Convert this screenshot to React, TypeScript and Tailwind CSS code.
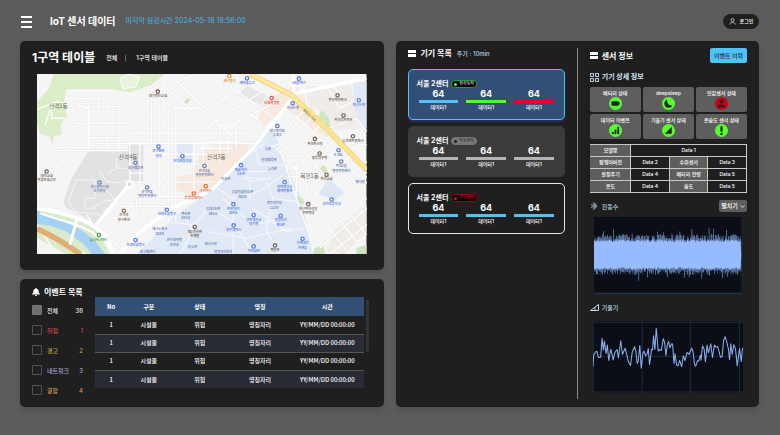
import React from "react";

const ROADS_MINOR = [
  "M140 76H270L330 90L395 72L470 52L520 30",
  "M140 76V118L160 130V175L200 180",
  "M176 80V120L205 130V258",
  "M208 76V258M235 76V150M262 84V260M300 92V262M330 92V350",
  "M160 100H262M176 125H300M205 150H540M208 175H330M215 198H310M205 218H300M225 236H560",
  "M105 257H320M140 130L190 150L120 300L51 350",
  "M51 232L75 245L90 285L150 330L100 420",
  "M51 300H85L110 350L95 400",
  "M360 150V420M395 95V240M420 95V420M445 110V480M468 150V470M522 150V380M550 150V300",
  "M330 205H580M330 235H700M380 268H560M380 297H570M330 325H560M330 352H580M340 395H540M300 425H480M270 455L330 480",
  "M395 72L420 95L460 130H540L640 215M420 50L520 140M450 30L620 190M480 27L700 200M520 27L730 175M580 27L770 165",
  "M430 110L520 30M460 135L580 30M490 150L640 40M540 150L700 50M570 180L735 75M610 195L770 110",
  "M580 205H690M560 180H650M560 230H650M600 180V290M625 170V265M650 170V250M540 250H640",
  "M780 185L960 380M800 165L1000 360M825 150L1041 355M765 205L900 430M760 240L840 330M850 130L1041 325",
  "M760 185L800 150M780 215L850 140M775 250L880 155M800 280L915 170M825 310L945 200M845 345L975 230M870 385L1000 265M890 425L1041 290M900 460L1041 335",
  "M780 250L830 400L880 540M830 300V400M860 330V430M800 285H850M800 310H850M805 335H880",
  "M890 530L1041 400M900 550L1041 430M930 569L1041 480M930 490L990 569M960 465L1020 540M985 440L1041 510",
  "M850 70L870 140L900 150M870 60H920L960 130L1000 110M920 27L960 90M930 190L1010 160L1041 200M940 230L1041 240",
  "M310 385L270 440L310 480M350 395V440L310 500M330 425L400 470",
  "M200 450L280 569M255 500L320 569M51 500L130 540L200 569M51 480L110 569",
];
const CAMPUS_ROADS = [
  "M170 345H225V400H195V430H225M170 345L145 410L165 440L240 450",
  "M240 320L260 350L300 355L320 345M225 375L265 380L290 410L250 440M290 280V310H320M260 330L300 300",
  "M215 430L250 410L310 400",
];
const BLUE_ROADS = [
  "M590 370L640 400L720 380L790 330M610 400L700 480L800 460M570 430L640 470L700 569",
  "M650 300L690 350L760 340M700 230L720 300L800 300M690 350V400M640 400V569M740 350L760 400L830 410",
  "M560 500L680 520L820 490M700 430L800 500L850 490M760 400L740 500L780 569M480 430L520 500L480 569M430 470L520 480L560 440",
  "M660 320H740M670 340H740M740 250L800 230M710 210L735 235L700 260",
];

const PLACES: [number, number, string, string, string?][] = [
  [414, 80, "대구영신교회", "#77695f"],
  [416, 245, "산격맨션", "#5c7fe0", "빌라"],
  [488, 274, "산격초등학교", "#5c7fe0"],
  [347, 294, "대구체육관", "#6d7fae"],
  [239, 353, "대구광역시청", "#6d7fae", "산격청사"],
  [80, 320, "대현교회", "#77695f", "복음문화공간"],
  [382, 368, "산격4동", "#6d7fae", "행정복지센터"],
  [312, 438, "산격대", "#8a7468", "청구맨션"],
  [522, 386, "투썸플레이스", "#e3733f"],
  [558, 364, "스타벅스", "#e3733f"],
  [554, 303, "산격3동", "#6d7fae", "행정복지센터"],
  [441, 435, "현대오일뱅크", "#5c7fe0"],
  [347, 526, "현대오일뱅크", "#5c7fe0"],
  [237, 511, "유니버시아드", "#4da24d"],
  [525, 487, "제2과학관", "#77695f", "인재원"],
  [629, 33, "세븐밸리", "#e0a13a"],
  [682, 40, "새마을금고", "#5c7fe0"],
  [756, 99, "신세계병원", "#dc5560"],
  [838, 41, "GS칼텍스", "#5c7fe0"],
  [819, 115, "하나은행", "#5c7fe0"],
  [773, 183, "대구북현동", "#6d7fae", "우체국"],
  [954, 91, "복현아이파크", "#77695f"],
  [972, 152, "복현푸르지오", "#77695f"],
  [1000, 214, "유한센트럴파크", "#77695f"],
  [1018, 106, "대구은행", "#5c7fe0"],
  [886, 222, "복현파크빌", "#77695f"],
  [900, 266, "블루밍주택", "#77695f"],
  [957, 256, "S-OIL", "#5c7fe0"],
  [965, 290, "복현1동", "#6d7fae", "행정복지센터"],
  [921, 330, "복현교회", "#77695f"],
  [936, 404, "경진초등학교", "#5c7fe0"],
  [866, 418, "대구복현성당", "#77695f", "주민마당"],
  [795, 352, "경북대학교", "#5c7fe0", "야외박물관"],
  [664, 301, "예술대학", "#5c7fe0", "1호관"],
  [641, 418, "인문대학", "#5c7fe0", "104호"],
  [702, 451, "경북대학교", "#5c7fe0", "대학원"],
  [642, 482, "상주캠퍼스", "#5c7fe0"],
  [783, 453, "사범대학", "#5c7fe0", "제1관"],
  [849, 522, "수의대학", "#5c7fe0", "본관동"],
  [702, 545, "학생회관", "#5c7fe0"],
  [766, 542, "백양로", "#77695f"],
];

const CAMPUS_LABELS: [number, number, string][] = [
  [745, 255, "농장"], [748, 288, "실내체육관"], [758, 315, "누리관"], [618, 347, "미술관"],
  [668, 385, "공동실험실습관"], [668, 399, "303호"], [580, 436, "공대1호관"], [580, 450, "201호"],
  [764, 418, "생명과학부"], [764, 432, "113호"], [498, 450, "백호관"], [498, 464, "201호"],
  [420, 496, "테크노파크"], [420, 511, "203호"], [464, 530, "산학협력원"], [464, 544, "정보동"],
  [518, 551, "일우관"], [573, 540, "테니스장"], [610, 564, "생명과학대학"], [383, 564, "대구콜센터"],
  [1022, 355, "예식장"],
];

function MapView() {
  return (
    <svg viewBox="51 27 990 542" className="block h-auto w-full" role="img" aria-label="지도">
      <rect x="51" y="27" width="990" height="542" fill="#f5f5f5" />
      <path d="M51 27H435L395 60L330 82L275 72L240 72L140 78L132 110L140 155L122 180L125 210L102 213L98 240L88 215L60 205L51 170Z" fill="#dbecc9" />
      <path d="M51 27H100L88 70L51 110Z" fill="#f5f5f5" />
      <path d="M300 40L325 28L360 35L348 65L310 72Z" fill="#e9f2df" stroke="#fff" strokeWidth="3" />
      <path d="M205 260H325V240H370V350H330L225 480L190 455L140 430L130 410L155 340Z" fill="#e2e2e2" />
      <path d="M465 234H518V294H465Z" fill="#e0e8f4" />
      <path d="M488 105L500 95L512 105L500 117Z" fill="#cfe4bd" />
      <path d="M655 90L680 62L740 90L725 120Z" fill="#e6e6e6" />
      <path d="M540 262L600 235L680 230L690 255L570 380L510 390L470 375L465 340L520 325Z" fill="#f7e9dd" />
      <path d="M735 105L830 60L880 130L925 190L940 225L880 195L800 130L730 185L715 165Z" fill="#f8e9df" />
      <path d="M745 185L775 220L800 300L845 400L880 569H350L470 450L580 375Z" fill="#e0e9f5" />
      <path d="M860 65L990 50L1030 190L930 195L900 140L860 110Z" fill="#f0ece9" />
      <path d="M1000 50H1041V190H1030L1005 130Z" fill="#e0e9f5" />
      <path d="M895 150L910 135L930 165V190L912 180Z" fill="#d0e6bc" />
      <path d="M898 315L912 300L925 318L912 328ZM832 395L850 400L855 420L838 412Z" fill="#d0e6bc" />
      <path d="M940 500L1041 420V500L975 569L920 560Z" fill="#f0ece8" />
      <path d="M885 550L910 540L918 569H880ZM1010 569V550L1041 540V569Z" fill="#cfe3c0" />
      <path d="M51 425L170 450L235 500L270 569H51Z" fill="#d9ebcc" />
      <path d="M51 438C100 465 200 475 255 569H215C190 520 130 500 51 488Z" fill="#a5d1f3" />
      <path d="M51 478C120 485 170 505 205 569H51Z" fill="#d9ebcc" />
      <path d="M51 520L140 569H51Z" fill="#f4f4f2" />
      <g fill="none" stroke="#e2e2e2" strokeWidth="6">
        {ROADS_MINOR.map((d) => <path key={d} d={d} />)}
      </g>
      <g fill="none" stroke="#fff" strokeWidth="4">
        {ROADS_MINOR.map((d) => <path key={d} d={d} />)}
      </g>
      <g fill="none" stroke="#f6f6f6" strokeWidth="3">
        {CAMPUS_ROADS.map((d) => <path key={d} d={d} />)}
      </g>
      <g fill="none" stroke="#f2f6fb" strokeWidth="4">
        {BLUE_ROADS.map((d) => <path key={d} d={d} />)}
      </g>
      <path d="M897 388L925 342L975 382L945 408Z" fill="#dce6f4" />
      <path d="M51 133L110 110L135 115M75 180L95 120V160H135" fill="none" stroke="#fff" strokeWidth="4" />
      <path d="M51 492C90 510 130 530 182 569" fill="none" stroke="#dfaf74" strokeWidth="17" />
      <path d="M51 430C130 445 200 460 240 500C265 525 275 545 278 569" fill="none" stroke="#fff" strokeWidth="12" />
      <path d="M60 445C120 470 210 480 240 525" fill="none" stroke="#fff" strokeWidth="6" />
      <path d="M172 460L150 540" fill="none" stroke="#fff" strokeWidth="9" />
      <path d="M329 358L228 480M300 569L355 505L450 435L580 372L700 250L830 85L1041 40M822 27V95" fill="none" stroke="#fff" strokeWidth="10" />
      <path d="M690 27L815 90L925 195L1041 315" fill="none" stroke="#e8cf80" strokeWidth="17" />
      <path d="M690 27L815 90L925 195L1041 315" fill="none" stroke="#fae290" strokeWidth="14" />
      <path d="M700 30L815 90L850 125" fill="none" stroke="#fff6d0" strokeWidth="3" />
      <circle cx="329" cy="358" r="9" fill="#ddd" stroke="#fff" strokeWidth="6" />
      <g textAnchor="middle" className="font-['Noto_Sans_CJK_KR',sans-serif]">
        <g fontSize="17" fill="#666">
          <text x="115" y="129">산격1동</text>
          <text x="325" y="283">산격4동</text>
          <text x="590" y="283">산격3동</text>
          <text x="870" y="341">복현1동</text>
        </g>
        <text x="870" y="155" fontSize="11" fill="#7c6a3a" transform="rotate(44 870 150)">복현오거리</text>
        <g fontSize="10" fontWeight="700">
          {PLACES.map(([x, y, name, color, second]) => (
            <g key={`${x}-${y}`} fill={color}>
              <circle cx={x} cy={y} r="5" fill="#fff" stroke={color} strokeWidth="4" />
              <text x={x} y={y + 17}>{name}</text>
              {second && <text x={x} y={y + 30}>{second}</text>}
            </g>
          ))}
          {CAMPUS_LABELS.map(([x, y, name]) => (
            <text key={`${x}-${y}`} x={x} y={y} fill="#6f83b8">{name}</text>
          ))}
        </g>
      </g>
    </svg>
  );
}

const FILTERS = [
  { name: "전체", count: 38, tone: "text-[#e6e6e6]", on: true },
  { name: "위험", count: 1, tone: "text-[#c9474d]", on: false },
  { name: "경고", count: 2, tone: "text-[#c9a545]", on: false },
  { name: "네트워크", count: 3, tone: "text-[#a9a3cf]", on: false },
  { name: "결함", count: 4, tone: "text-[#cc9358]", on: false },
];

function EventPanel() {
  return (
    <section className="flex grow gap-3 rounded-[5px] bg-[#1f1f1f] pt-2 pr-[15px] pb-3 pl-3 shadow-md">
      <div className="w-[51px] shrink-0">
        <h2 className="flex h-[10px] items-center gap-1 text-[8px] font-bold whitespace-nowrap">
          <svg viewBox="0 0 16 16" className="size-2 shrink-0" fill="#fff">
            <path d="M8 0c1 0 1.500.7 1.500 1.500C12 2.200 13.500 4.500 13.500 7v2.500L16 12v1H0v-1l2.500-2.500V7C2.500 4.500 4 2.200 6.500 1.500 6.500.7 7 0 8 0zM5.500 14h5c-.4 1.300-1.300 2-2.500 2s-2.100-.7-2.500-2z" />
          </svg>
          이벤트 목록
        </h2>
        <div className="mt-2 flex flex-col gap-[10px]">
          {FILTERS.map((f) => (
            <label key={f.name} className={`flex h-[10px] items-center text-[6px] font-medium whitespace-nowrap ${f.tone}`}>
              <input
                type="checkbox"
                defaultChecked={f.on}
                className="mr-[5px] size-[10px] shrink-0 appearance-none rounded-[1px] border border-[#555] checked:border-[#777] checked:bg-[#6e6e6e]"
              />
              {f.name}
              <span className="ml-auto">{f.count}</span>
            </label>
          ))}
        </div>
      </div>
      <div className="mt-[10px] flex grow items-start gap-[2px]">
        <table className="grow table-fixed border-collapse text-center font-['Noto_Sans_CJK_KR',sans-serif] text-[6px] leading-none font-medium whitespace-nowrap">
          <thead className="bg-[#344f76]">
            <tr className="h-[19px]">
              <th className="w-[12%]">No</th>
              <th className="w-[16%]">구분</th>
              <th className="w-[22%]">상태</th>
              <th className="w-[23%]">명칭</th>
              <th className="w-[27%]">시간</th>
            </tr>
          </thead>
          <tbody>
            {[1, 2, 3, 4].map((n) => (
              <tr key={n} className="h-[18px] border-b border-[#555] last:border-0 even:bg-[#292b35]">
                <td>1</td>
                <td>시설물</td>
                <td>위험</td>
                <td>명칭자리</td>
                <td>YY/MM/DD 00:00:00</td>
              </tr>
            ))}
          </tbody>
        </table>
        <div className="mt-[2px] h-[53px] w-[3px] rounded-full bg-[#333]" />
      </div>
    </section>
  );
}

function StackIcon() {
  return (
    <span className="flex w-2 shrink-0 flex-col gap-px">
      <span className="h-[3px] bg-white" />
      <span className="h-[3px] bg-white" />
    </span>
  );
}

const DEVICES = [
  {
    card: "border-[#4fc3f5] bg-[#344f76] shadow-[0_2px_2px_#2b2d63]",
    badge: "border-[#2f9a2f] bg-black text-[#e6e6e6]",
    dot: "bg-[#4dff33]",
    status: "정상동작",
    bars: ["bg-[#4fc3f5]", "bg-[#4dff33]", "bg-[#f0001c]"],
  },
  {
    card: "border-[#3b3b3b] bg-[#3b3b3b]",
    badge: "border-[#777] bg-[#777] text-[#333]",
    dot: "bg-[#222]",
    status: "작동중지",
    bars: ["bg-[#b4b4b4]", "bg-[#b4b4b4]", "bg-[#b4b4b4]"],
  },
  {
    card: "border-[#e8e8e8] bg-[#1f1f1f]",
    badge: "border-[#a00010] bg-black text-[#c00018]",
    dot: "bg-[#f0001c]",
    status: "경보발생",
    bars: ["bg-[#4fc3f5]", "bg-[#4fc3f5]", "bg-[#4fc3f5]"],
  },
];

function DeviceList() {
  return (
    <section className="min-w-0 flex-1 pr-3">
      <h2 className="flex h-[10px] items-center gap-[5px] text-[8px] font-bold whitespace-nowrap">
        <StackIcon />
        기기 목록
        <span className="text-[6px] font-medium text-[#b7d9ee]">주기 : 10min</span>
      </h2>
      <div className="mt-[11px] flex flex-col gap-[6px]">
        {DEVICES.map((d) => (
          <article key={d.status} className={`rounded-[5px] border px-2 pt-[10px] pb-2 ${d.card}`}>
            <h3 className="flex h-2 items-center gap-[3px] text-[7px] font-bold whitespace-nowrap">
              서울 2센터
              <span className={`flex h-2 items-center gap-[2px] rounded-full border px-[2px] text-[4px] font-medium ${d.badge}`}>
                <span className={`size-[3px] rounded-full ${d.dot}`} />
                {d.status}
              </span>
            </h3>
            <div className="mx-[2px] mt-px flex gap-2">
              {d.bars.map((bar, i) => (
                <div key={i} className="flex-1 text-center">
                  <p className="text-[9px] leading-[9px] font-bold">64</p>
                  <div className={`mt-[2px] h-[3px] ${bar}`} />
                  <p className="mt-px text-[5px] leading-[7px] font-medium">데이터1</p>
                </div>
              ))}
            </div>
          </article>
        ))}
      </div>
    </section>
  );
}

const INK = "#1c1f1c";
const TILES = [
  { name: "배터리 상태", dot: "bg-[#55ff2b]", art: <g fill={INK}><rect x="3" y="7" width="16" height="10" rx="1.500" /><rect x="19" y="10" width="2.500" height="4" /></g> },
  { name: "deepsleep", dot: "bg-[#55ff2b]", art: <path d="M9 3A9.500 9.500 0 1 0 21 16C14 18 8 12 9 3z" fill={INK} /> },
  { name: "인감센서 상태", dot: "bg-[#cc0018]", art: <g fill={INK}><circle cx="12" cy="7.500" r="4.500" /><path d="M3 20c1-4 4-6 9-6s8 2 9 6z" /></g> },
  { name: "데이터 이벤트", dot: "bg-[#55ff2b]", art: <g fill={INK}><rect x="4" y="15" width="4" height="5" /><rect x="10" y="10" width="4" height="10" /><rect x="16" y="4" width="4" height="16" /></g> },
  { name: "기울기 센서 상태", dot: "bg-[#55ff2b]", art: <path d="M4 19L19 4V19Z" fill={INK} /> },
  { name: "온습도 센서 상태", dot: "bg-[#55ff2b]", art: <g fill={INK}><rect x="9.500" y="2" width="5" height="13" rx="2.500" /><circle cx="12" cy="19.500" r="2.700" /></g> },
];

function noise(n: number) {
  const v = Math.sin(n * 127.1 + 11.7) * 43758.5453;
  return v - Math.floor(v);
}

function VibrationChart() {
  const bars = Array.from({ length: 222 }, (_, i) => i);
  const swell = (i: number) => (noise(i) > 0.9 ? 26 * noise(i + 400) : 0) + 8 * Math.abs(Math.sin(i / 9));
  return (
    <svg viewBox="0 0 447 231" className="block h-auto w-full" role="img" aria-label="진동수 그래프">
      <rect width="447" height="231" fill="#0c0e17" />
      <path d="M0 58H447M0 172H447M444 0V231" stroke="#1c2c3c" strokeWidth="2" />
      {bars.map((i) => {
        const up = 38 + 18 * noise(i + 900) + swell(i);
        const down = 36 + 16 * noise(i + 1700) + swell(i + 37) * 0.9;
        return <rect key={i} x={i * 2} y={115 - up} width="2" height={up + down} fill="#7291c6" />;
      })}
      <path
        d={`M0 115${bars.map((i) => `L${i * 2} ${115 - 38 - 10 * noise(i + 900)}`).join("")}L444 115${bars.map((i) => `L${442 - i * 2} ${115 + 36 + 9 * noise(i + 1700)}`).join("")}Z`}
        fill="#97bbff"
      />
      <path d="M0 230H447" stroke="#24435f" strokeWidth="3" />
    </svg>
  );
}

function TiltChart() {
  return (
    <svg viewBox="46 78 449 215" className="block h-auto w-full" role="img" aria-label="기울기 그래프">
      <rect x="46" y="78" width="449" height="215" fill="#0c0e17" />
      <path d="M46 82H495M46 184H495M46 290H495M193 78V293M337 78V293M484 78V293M47 78V293" stroke="#1d3142" strokeWidth="2.500" fill="none" />
      <path
        d="M46 214L48 180L54 170L58 169L62 187L69 186L73 130L77 165L80 138L85 175L89 150L93 196L99 163L103 178L106 194L111 173L118 163L122 188L129 137L134 178L142 159L148 184L152 200L158 211L163 172L170 155L174 168L178 205L181 200L186 151L190 219L195 175L199 168L203 182L208 176L211 160L215 208L221 163L224 164L227 122L231 163L235 100L241 168L246 163L250 166L256 131L260 142L264 181L268 150L272 139L276 158L281 146L284 147L288 205L291 176L296 210L300 212L305 196L311 214L316 182L321 196L327 172L333 178L341 159L345 170L349 206L353 213L358 197L362 198L367 180L369 195L373 153L378 162L382 200L387 150L391 173L398 146L403 187L409 150L413 156L418 154L423 170L427 186L432 185L436 137L441 125L446 142L451 163L454 194L458 146L462 178L467 149L472 162L477 212L484 160L489 199L493 158"
        fill="none"
        stroke="#8fb3f2"
        strokeWidth="3"
        strokeLinejoin="round"
      />
    </svg>
  );
}

function SensorInfo() {
  const head = "border border-[#c8c8c8] border-l-[#5e5e5e] bg-[#5e5e5e] font-medium";
  const cell = "border border-[#c8c8c8] font-medium";
  return (
    <section className="min-w-0 flex-1 border-l border-[#8a8a8a] pl-3">
      <div className="flex h-[15px] items-center justify-between">
        <h2 className="flex items-center gap-1 text-[8px] font-bold whitespace-nowrap">
          <StackIcon />
          센서 정보
        </h2>
        <button className="h-[15px] w-[37px] rounded-[2px] bg-[#4fc3f5] text-[6px] leading-none font-medium whitespace-nowrap text-[#153043]">이벤트 이력</button>
      </div>
      <h3 className="mt-[9px] flex h-[10px] items-center gap-[3px] text-[7px] font-bold whitespace-nowrap text-[#cfe6f7]">
        <svg viewBox="0 0 18 18" className="size-[9px]" fill="none" stroke="#bcd6ea" strokeWidth="2">
          <path d="M1 1h6v6H1zM11 1h6v6h-6zM1 11h6v6H1zM11 11h6v6h-6z" />
        </svg>
        기기 상세 정보
      </h3>
      <ul className="mt-[5px] grid grid-cols-3 gap-[2px]">
        {TILES.map((t) => (
          <li key={t.name} className="flex h-[25px] flex-col items-center rounded-[2px] bg-[#5e5e5e] pt-[3px]">
            <span className="text-[5px] leading-[7px] font-medium whitespace-nowrap">{t.name}</span>
            <span className={`flex size-[13px] items-center justify-center rounded-full ${t.dot}`}>
              <svg viewBox="0 0 24 24" className="size-[11px]">{t.art}</svg>
            </span>
          </li>
        ))}
      </ul>
      <table className="mt-[5px] w-full table-fixed border-collapse text-center text-[5px] leading-none whitespace-nowrap">
        <tbody>
          <tr className="h-[12px]">
            <th className={`w-[26%] ${head}`}>모델명</th>
            <td colSpan={3} className={cell}>Data 1</td>
          </tr>
          <tr className="h-[12px]">
            <th className={head}>펌웨어버전</th>
            <td className={cell}>Data 2</td>
            <th className={head}>수위센서</th>
            <td className={cell}>Data 3</td>
          </tr>
          <tr className="h-[12px]">
            <th className={head}>설정주기</th>
            <td className={cell}>Data 4</td>
            <th className={head}>배터리 잔량</th>
            <td className={cell}>Data 5</td>
          </tr>
          <tr className="h-[12px]">
            <th className={head}>온도</th>
            <td className={cell}>Data 4</td>
            <th className={head}>습도</th>
            <td className={cell}>Data 5</td>
          </tr>
        </tbody>
      </table>
      <div className="mt-[7px] flex h-[12px] items-center justify-between">
        <h3 className="flex items-center gap-1 text-[6px] font-medium whitespace-nowrap text-[#b7d9ee]">
          <svg viewBox="0 0 18 18" className="size-2" fill="none" stroke="#bcd6ea" strokeWidth="1.800">
            <path d="M6 5l5 4-5 4M7 1c6 3 6 13 0 16M3 5c3 2 3 6 0 8M11 3c4 3 4 9 0 12" />
          </svg>
          진동수
        </h3>
        <button className="flex h-[12px] w-[28px] items-center justify-center gap-[2px] rounded-[2px] bg-[#5e5e5e] text-[6px] leading-none font-medium whitespace-nowrap">
          펼치기
          <svg viewBox="0 0 10 6" className="w-[5px]" fill="none" stroke="#fff" strokeWidth="1.500"><path d="M1 1l4 4 4-4" /></svg>
        </button>
      </div>
      <div className="mt-[5px] pr-[5px] pl-1"><VibrationChart /></div>
      <h3 className="mt-[9px] flex h-[10px] items-center gap-[3px] text-[6px] font-medium whitespace-nowrap text-[#b7d9ee]">
        <svg viewBox="0 0 18 14" className="w-[9px]" fill="none" stroke="#bcd6ea" strokeWidth="2"><path d="M1 13L17 1V13ZM10 7v6" /></svg>
        기울기
      </h3>
      <div className="mt-2 pr-1 pl-[3px]"><TiltChart /></div>
    </section>
  );
}

export default function App() {
  return (
    <div className="min-h-screen bg-[#5b5b5b] pr-[21px] pb-7 pl-5 font-['Inter','Noto_Sans_CJK_KR',sans-serif] text-white">
      <header className="flex h-[41px] items-center pt-[2px]">
        <button aria-label="메뉴" className="ml-px flex w-[11px] flex-col gap-[3px]">
          <span className="h-[2px] bg-white" />
          <span className="h-[2px] bg-white" />
          <span className="h-[2px] bg-white" />
        </button>
        <h1 className="ml-[18px] text-[10px] font-bold whitespace-nowrap">IoT 센서 데이터</h1>
        <p className="ml-[10px] text-[7px] font-medium whitespace-nowrap text-[#4ba9d6]">마지막 점검시간 2024-05-16 16:56:00</p>
        <button className="ml-auto flex h-[15px] w-[36px] items-center justify-center gap-1 rounded-full bg-[#1f1f1f] text-[5px] leading-none font-medium whitespace-nowrap">
          <svg viewBox="0 0 14 14" className="size-[7px]" fill="none" stroke="#ddd" strokeWidth="1.500">
            <circle cx="7" cy="4" r="3" />
            <path d="M1 13c1-3 3-4 6-4s5 1 6 4" />
          </svg>
          로그인
        </button>
      </header>
      <main className="grid grid-cols-2 gap-3">
        <div className="flex min-w-0 flex-col gap-[9px]">
          <section className="rounded-[5px] bg-[#1f1f1f] px-[17px] pt-2 pb-4 shadow-md">
            <div className="-ml-[5px] flex h-[17px] items-center whitespace-nowrap">
              <h2 className="text-[12px] font-bold">1구역 테이블</h2>
              <nav className="ml-[11px] flex items-center gap-2 text-[6px] font-medium">
                <a href="#all">전체</a>
                <span className="h-[6px] w-px bg-[#666]" />
                <a href="#zone1" className="ml-[2px]">1구역 테이블</a>
              </nav>
            </div>
            <div className="mt-2"><MapView /></div>
          </section>
          <EventPanel />
        </div>
        <div className="flex min-w-0 rounded-[5px] bg-[#1f1f1f] px-3 pt-[7px] pb-2 shadow-md">
          <DeviceList />
          <SensorInfo />
        </div>
      </main>
    </div>
  );
}
